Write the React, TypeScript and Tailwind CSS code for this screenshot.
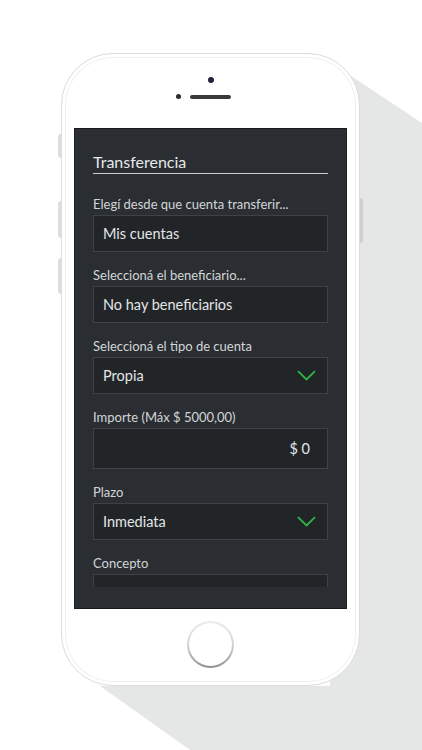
interface Field {
  label: string;
  value: string;
  select?: boolean;
  right?: boolean;
  tall?: boolean;
}

const fields: Field[] = [
  { label: "Elegí desde que cuenta transferir...", value: "Mis cuentas" },
  { label: "Seleccioná el beneficiario...", value: "No hay beneficiarios" },
  { label: "Seleccioná el tipo de cuenta", value: "Propia", select: true },
  { label: "Importe (Máx $ 5000,00)", value: "$ 0", right: true, tall: true },
  { label: "Plazo", value: "Inmediata", select: true },
  { label: "Concepto", value: "" },
];

function Chevron() {
  return (
    <svg width="19" height="11" viewBox="0 0 19 11" fill="none">
      <path d="M1 1.2L9.5 9.5L18 1.2" stroke="#2fb544" strokeWidth="1.8" />
    </svg>
  );
}

function FormRow({ field, first }: { field: Field; first: boolean }) {
  return (
    <div className={first ? "mt-[22px]" : "mt-[15px]"}>
      <p className="text-[13px] leading-4 text-[#d2d5d8]">{field.label}</p>
      <div
        className={`mt-[3px] flex items-center border border-[#3e4246] bg-[#222528] px-[9px] ${
          field.tall ? "h-[41px]" : "h-[37px]"
        } ${field.right ? "justify-end pr-[17px]" : "justify-between pr-[11px]"}`}
      >
        <span className="text-[14.5px] leading-5 text-[#e3e5e7]">{field.value}</span>
        {field.select && <Chevron />}
      </div>
    </div>
  );
}

export default function App() {
  return (
    <div
      className="relative h-[750px] w-[422px] overflow-hidden bg-white"
      style={{ fontFamily: "Lato, 'Noto Sans', sans-serif" }}
    >
      <svg className="absolute inset-0" width="422" height="750" viewBox="0 0 422 750">
        <polygon points="330,62 422,123 422,750 190,750 100,686 330,686" fill="#e5e6e6" />
      </svg>

      <div className="relative ml-[61px] mt-[53px] flex h-[633px] w-[299px] flex-col items-center rounded-[52px] border-[1.5px] border-[#dcdcdc] bg-white shadow-[inset_0_0_0_3px_#ffffff,inset_0_0_0_4px_#efefef]">
        {/* side buttons */}
        <div className="absolute -left-[4px] top-[80px] h-[24px] w-[3px] rounded-l-sm bg-[#dedede]" />
        <div className="absolute -left-[4px] top-[147px] h-[37px] w-[3px] rounded-l-sm bg-[#dedede]" />
        <div className="absolute -left-[4px] top-[204px] h-[36px] w-[3px] rounded-l-sm bg-[#dedede]" />
        <div className="absolute -right-[4px] top-[144px] h-[45px] w-[3px] rounded-r-sm bg-[#cfcfcf]" />

        {/* camera + speaker */}
        <div className="mt-[23px] h-[6px] w-[6px] rounded-full bg-[#1d2440]" />
        <div className="mt-[11px] flex items-center">
          <div className="h-[5px] w-[5px] rounded-full bg-[#2b2b2b]" />
          <div className="ml-[9px] h-[4px] w-[41px] rounded-full bg-[#3a3a3a]" />
          <div className="w-[14px]" />
        </div>

        {/* screen */}
        <div className="mt-[29px] h-[481px] w-[273px] border border-t-[#17191b] border-x-[#202326] border-b-[#17191b] bg-[#2a2e32]">
          <div className="h-[458px] overflow-hidden px-[18px] pt-[23px]">
            <h1 className="border-b border-[#c9cbcd] pb-[1px] text-[16px] leading-5 text-[#e6e8ea]">
              Transferencia
            </h1>
            {fields.map((f, i) => (
              <FormRow key={f.label} field={f} first={i === 0} />
            ))}
          </div>
        </div>

        {/* home button */}
        <div className="mt-[12px] flex h-[47px] w-[47px] items-center justify-center rounded-full bg-linear-to-b from-[#ececec] via-[#d5d5d5] to-[#8f8f8f]">
          <div className="h-[43px] w-[43px] rounded-full bg-white" />
        </div>
      </div>
    </div>
  );
}
